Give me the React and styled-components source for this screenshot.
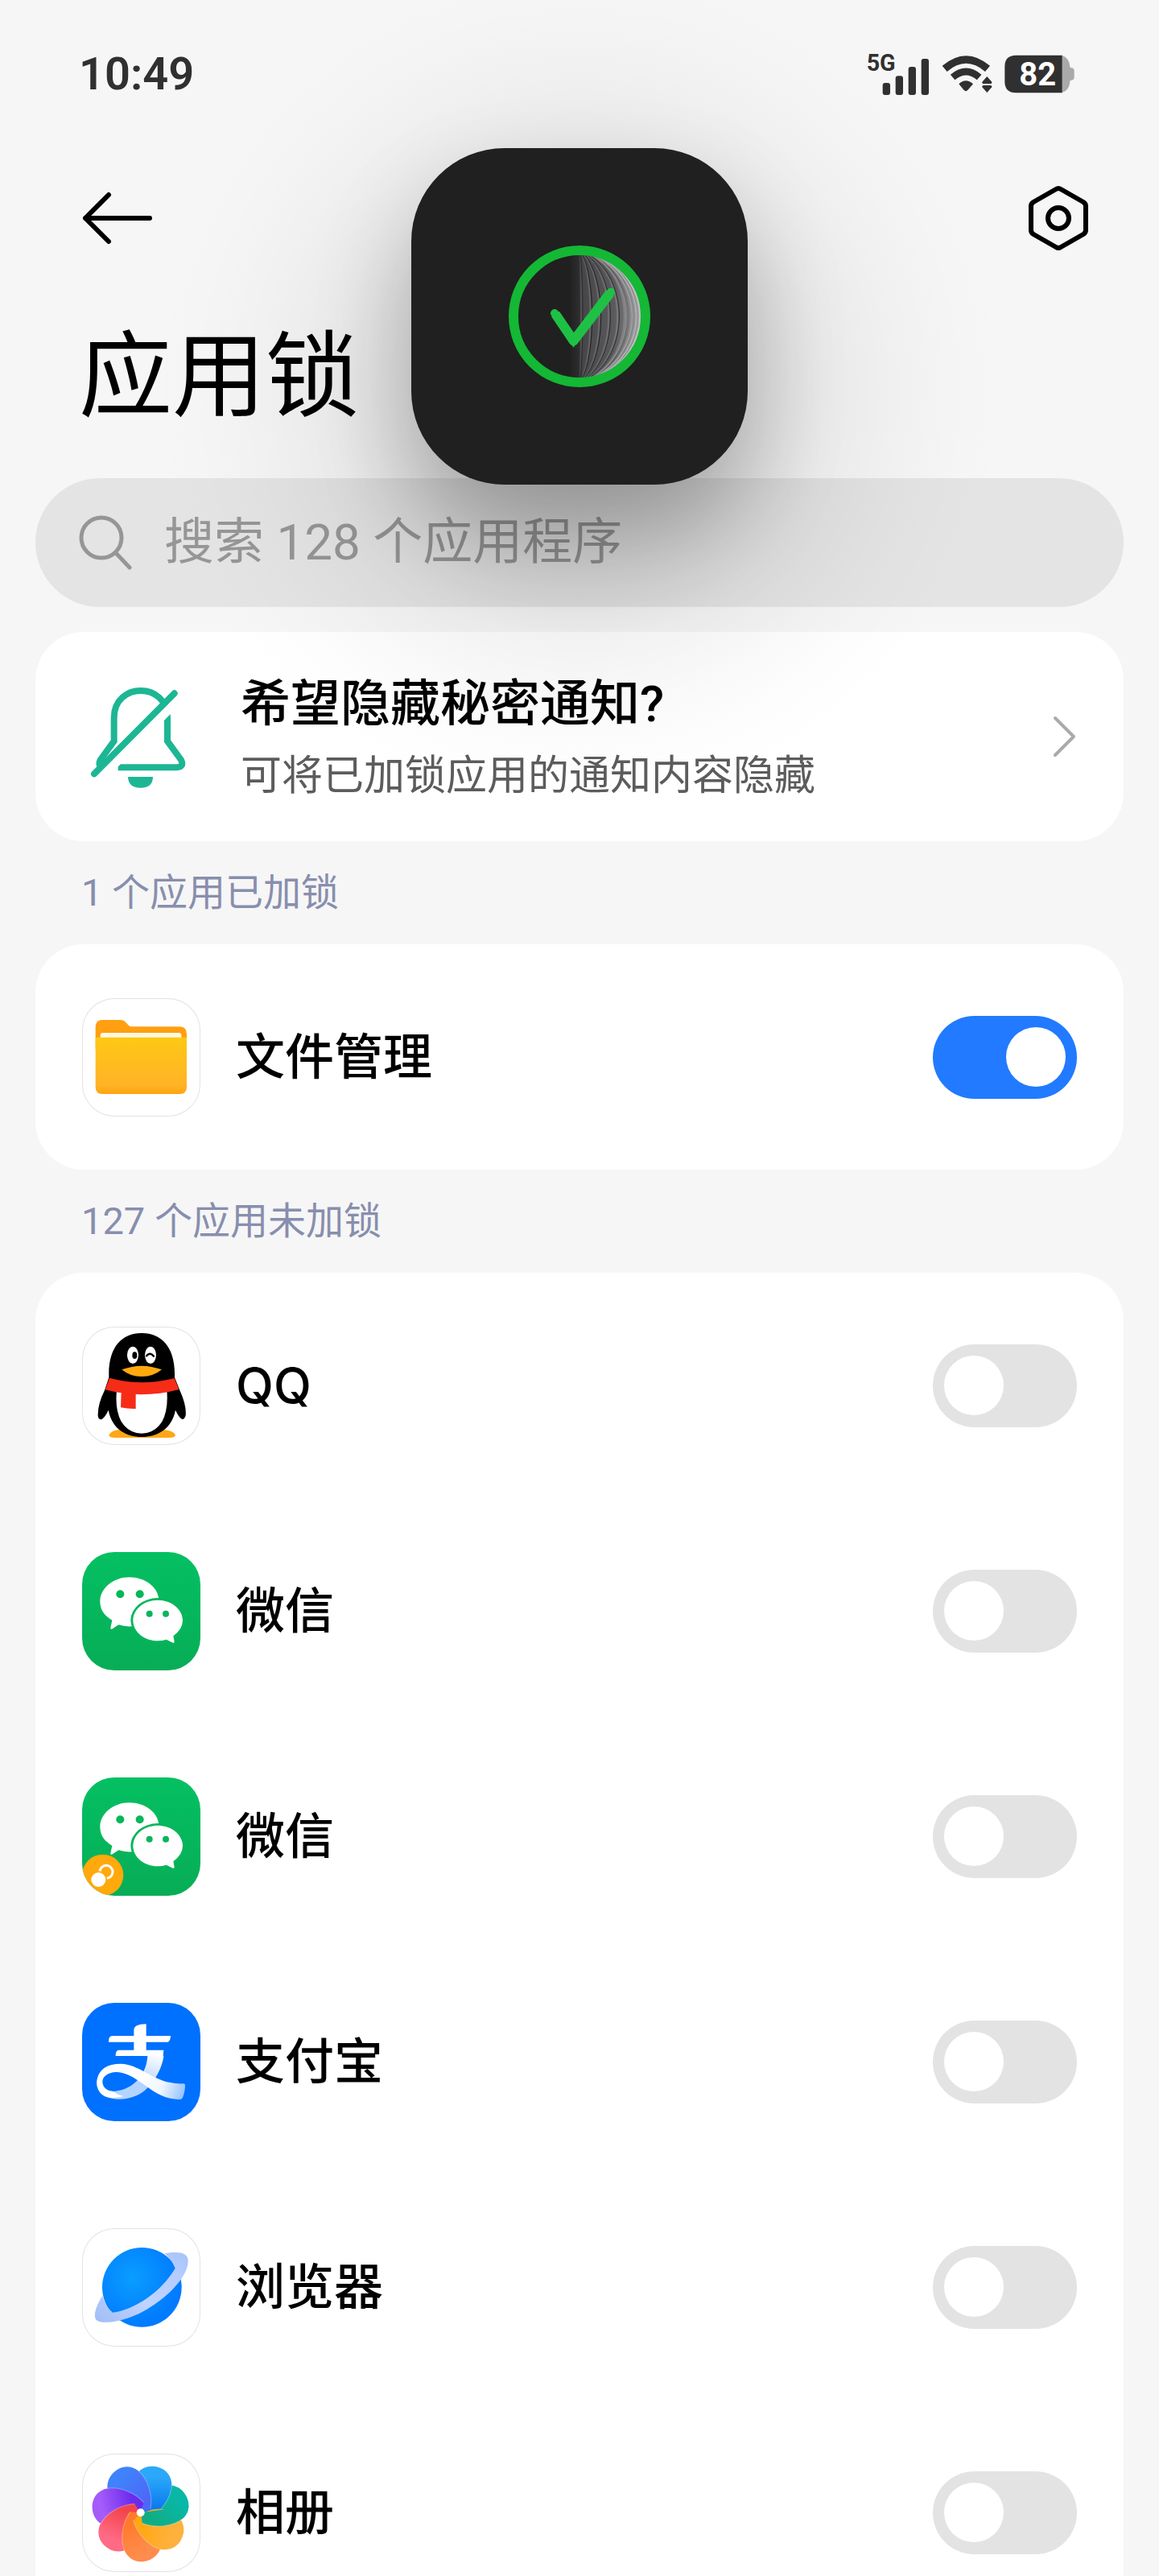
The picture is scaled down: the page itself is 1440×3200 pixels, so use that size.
import React, { useState } from 'react'
import styled, { createGlobalStyle } from 'styled-components'

const GlobalStyle = createGlobalStyle`
  * {
    box-sizing: border-box;
  }

  body {
    margin: 0;
    background: #f6f6f6;
    color: #000;
    font-family: Roboto, 'Noto Sans CJK SC', sans-serif;
  }
`

const Screen = styled.div`
  position: relative;
  height: 100vh;
  overflow: hidden;
`

const StatusBar = styled.div`
  display: flex;
  align-items: center;
  justify-content: space-between;
  height: 184px;
  padding: 0 104px 0 98px;
  color: #303030;
`

const Clock = styled.time`
  font-size: 56px;
  line-height: 64px;
  font-weight: 600;
`

const StatusIcons = styled.div`
  display: flex;
  align-items: center;
  gap: 15px;
`

const Toolbar = styled.header`
  display: flex;
  align-items: center;
  justify-content: space-between;
  height: 174px;
  padding: 0 85px 0 100px;
`

const IconButton = styled.button`
  display: flex;
  padding: 0;
  border: 0;
  background: none;
  color: inherit;
  cursor: pointer;
`

const PageTitle = styled.h1`
  margin: 0;
  padding: 40px 98px 56px;
  font-size: 116px;
  line-height: 140px;
  font-weight: 400;
`

const Content = styled.main`
  padding: 0 44px;
`

const SearchBox = styled.label`
  display: flex;
  align-items: center;
  gap: 40px;
  height: 160px;
  margin-bottom: 31px;
  padding: 0 54px;
  border-radius: 80px;
  background: #e4e4e4;
  color: #969696;
`

const SearchInput = styled.input`
  flex: 1;
  min-width: 0;
  padding: 0;
  border: 0;
  outline: 0;
  background: none;
  font: inherit;
  font-size: 62px;
  line-height: 80px;

  &::placeholder {
    color: #969696;
    opacity: 1;
  }
`

const Card = styled.section`
  border-radius: 60px;
  background: #fff;
`

const NoticeLink = styled.a`
  display: flex;
  align-items: center;
  height: 260px;
  padding: 0 58px 0 68px;
  border-radius: 60px;
  background: #fff;
  color: #000;
  text-decoration: none;
`

const NoticeText = styled.div`
  flex: 1;
  padding: 12px 0 0 67px;
`

const NoticeTitle = styled.div`
  font-size: 62px;
  line-height: 86px;
  font-weight: 500;
`

const NoticeDetail = styled.div`
  font-size: 51px;
  line-height: 92px;
  color: #5c5c5c;
`

const GroupTitle = styled.h2`
  margin: 0;
  padding: 0 57px;
  font-size: 47px;
  line-height: 128px;
  font-weight: 400;
  color: #888eae;
`

const AppList = styled.ul`
  margin: 0;
  padding: 0;
  list-style: none;
`

const AppRow = styled.li`
  display: flex;
  align-items: center;
  gap: 44px;
  height: 280px;
  padding: 0 58px;
`

const AppTile = styled.svg`
  flex: none;
  width: 147px;
  height: 147px;
  border-radius: 40px;
  background: ${({ $fill }) => $fill || '#fff'};
  box-shadow: ${({ $fill }) => ($fill ? 'none' : 'inset 0 0 0 1px #e2e2e2')};
`

const AppName = styled.label`
  flex: 1;
  font-family: Inter, 'Noto Sans CJK SC', sans-serif;
  font-size: 61px;
  line-height: 80px;
  font-weight: 500;
`

const Switch = styled.input`
  appearance: none;
  display: flex;
  align-items: center;
  justify-content: ${({ checked }) => (checked ? 'flex-end' : 'flex-start')};
  flex: none;
  width: 179px;
  height: 103px;
  margin: 0;
  padding: 0 14px;
  border-radius: 52px;
  background: ${({ checked }) => (checked ? '#217aff' : '#e3e3e3')};
  cursor: pointer;

  &::before {
    content: '';
    width: 74px;
    height: 74px;
    border-radius: 50%;
    background: #fff;
  }
`

// wide soft shade that the unlock panel floats on
const UnlockOverlay = styled.div`
  position: absolute;
  top: -66px;
  left: 50%;
  display: flex;
  justify-content: center;
  width: 1100px;
  height: 1100px;
  margin-left: -550px;
  padding-top: 250px;
  background: radial-gradient(
    closest-side,
    rgba(0, 0, 0, 0.18),
    rgba(0, 0, 0, 0.15) 20%,
    rgba(0, 0, 0, 0.1) 38%,
    rgba(0, 0, 0, 0.05) 56%,
    rgba(0, 0, 0, 0.02) 74%,
    rgba(0, 0, 0, 0.005) 88%,
    transparent
  );
  pointer-events: none;
`

const UnlockPanel = styled.div`
  display: flex;
  align-items: center;
  justify-content: center;
  width: 418px;
  height: 418px;
  border-radius: 116px;
  background: #202020;
  box-shadow: 0 60px 120px rgba(0, 0, 0, 0.24);
`

const Signal = () => (
  <svg width='80' height='70' viewBox='100 39 240 210' fill='currentColor'>
    <text x='108' y='132' fontSize='86' fontWeight='700'>5G</text>
    <rect x='168' y='177' width='28' height='45' rx='9' />
    <rect x='216' y='151' width='28' height='71' rx='9' />
    <rect x='264' y='117' width='28' height='105' rx='9' />
    <rect x='312' y='87' width='28' height='135' rx='9' />
  </svg>
)

const Wifi = () => (
  <svg width='64' height='60' viewBox='388 66 192 180' fill='none' stroke='currentColor'>
    <path d='M402 136 Q482 68 562 136' strokeWidth='28' />
    <path d='M432 168 Q482 126 531 168' strokeWidth='26' />
    <path d='M455 193 Q481 168 508 193 L488 216 Q481 223 474 216Z' fill='currentColor' stroke='none' />
    <path d='M560 165 L578 185 Q579 192 572 192 H548 Q541 192 542 185Z M560 225 L542 205 Q541 198 548 198 H572 Q579 198 578 205Z' fill='currentColor' stroke='none' />
  </svg>
)

const Battery = () => (
  <svg width='88' height='60' viewBox='622 64 264 180'>
    <path d='M836 84 Q864 92 867 130 Q882 130 882 142 V166 Q882 178 867 178 Q864 216 836 224Z' fill='#aaa' />
    <path d='M665 84 H837 V224 H665 Q623 224 623 182 V126 Q623 84 665 84Z' fill='#303030' />
    <text x='677' y='197' fontSize='120' fontWeight='700' fill='#fff'>82</text>
  </svg>
)

const BackArrow = () => (
  <svg width='90' height='66' viewBox='0 0 90 66' fill='none' stroke='currentColor' strokeWidth='6' strokeLinecap='round' strokeLinejoin='round'>
    <path d='M35 4 L6 33 L35 62 M6 33 H86' />
  </svg>
)

const SettingsIcon = () => (
  <svg width='80' height='84' viewBox='0 0 80 84' fill='none' stroke='currentColor' strokeWidth='6' strokeLinejoin='round'>
    <path d='M37 6 Q40 4 43 6 L71 22 Q74 24 74 27 V57 Q74 60 71 62 L43 78 Q40 80 37 78 L9 62 Q6 60 6 57 V27 Q6 24 9 22Z' />
    <circle cx='40' cy='42' r='13' />
  </svg>
)

const SearchIcon = () => (
  <svg width='66' height='68' viewBox='0 0 66 68' fill='none' stroke='currentColor' strokeWidth='5' strokeLinecap='round'>
    <circle cx='28' cy='28' r='25' />
    <path d='M46 47 L63 65' />
  </svg>
)

const MutedBell = () => (
  <svg width='120' height='128' viewBox='66 63 360 384' fill='none' stroke='#1db694' strokeWidth='24'>
    <path d='M170 370 H388 Q418 368 405 342 L354 272 V185 C354 50 155 50 155 185 V272 L104 342 Q96 358 106 366' />
    <path d='M425 88 L96 418' stroke='#fff' strokeWidth='33' />
    <path d='M380 94 L81 394' strokeLinecap='round' />
    <path d='M207 405 H300 Q300 446 254 446 T207 405Z' fill='#1db694' stroke='none' />
  </svg>
)

const Chevron = () => (
  <svg width='32' height='54' viewBox='0 0 32 54' fill='none' stroke='#aaa' strokeWidth='4' strokeLinecap='round' strokeLinejoin='round'>
    <path d='M5 4 L28 27 L5 50' />
  </svg>
)

// middle x of every glass rib, the colour of its edge and its width
const ribs = [
  [372, '#29292b', 3],
  [407, '#1f1f21', 3],
  [440, '#1f1f21', 3],
  [475, '#29292b', 3],
  [508, '#29292b', 3],
  [534, '#8c8c8e', 5],
  [557, '#a2a2a4', 5],
  [572, '#b0b0b2', 6],
  [586, '#c0c0c2', 8]
]

const CheckMark = () => (
  <svg width='176' height='176' viewBox='96 75 528 528' fill='none'>
    <defs>
      <linearGradient id='glass'>
        <stop offset='0' stopColor='#222' />
        <stop offset='0.14' stopColor='#2f2f31' />
        <stop offset='0.17' stopColor='#464648' />
        <stop offset='0.6' stopColor='#5a5a5c' />
        <stop offset='1' stopColor='#929294' />
      </linearGradient>
      <clipPath id='dial'>
        <circle cx='360' cy='339' r='230' />
      </clipPath>
    </defs>
    <g clipPath='url(#dial)'>
      <rect x='326' y='100' width='270' height='480' fill='url(#glass)' />
      {ribs.map(([x, color, width], i) => {
        const start = 362 + i * 7
        const bend = (8 * x - 2 * start) / 6
        return (
          <g key={x}>
            <path d={`M${start} 105 C${bend - 8} 200 ${bend - 8} 478 ${start} 573`} stroke='#fff' strokeOpacity='0.14' strokeWidth='7' />
            <path d={`M${start} 105 C${bend} 200 ${bend} 478 ${start} 573`} stroke={color} strokeWidth={width} />
          </g>
        )
      })}
    </g>
    <circle cx='360' cy='339' r='246' stroke='#14b835' strokeWidth='36' />
    <path d='M270 330 L338 430 L474 252' stroke='#1fc145' strokeWidth='36' strokeLinejoin='round' />
    <path d='M267 327 L338 430 L477 248' stroke='#1fc145' strokeWidth='30' strokeLinecap='round' />
  </svg>
)

const FilesIcon = () => (
  <AppTile viewBox='36 51 441 441'>
    <defs>
      <linearGradient id='folder' x1='0' y1='0' x2='0' y2='1'>
        <stop offset='0' stopColor='#fec814' />
        <stop offset='0.85' stopColor='#ffb327' />
        <stop offset='1' stopColor='#ffa40c' />
      </linearGradient>
    </defs>
    <path d='M86 160 Q86 132 112 132 H180 Q192 132 198 140 L210 153 Q214 157 222 157 H398 Q426 157 426 185 V240 H86Z' fill='#ff9f11' />
    <rect x='104' y='180' width='302' height='40' rx='10' fill='#fff8e0' />
    <path d='M86 197 H426 V382 Q426 408 400 408 H112 Q86 408 86 382Z' fill='url(#folder)' />
  </AppTile>
)

const QQIcon = () => (
  <AppTile viewBox='36 51 441 441'>
    <path d='M136 456 Q142 436 185 434 H335 Q378 438 384 456 Q382 465 360 465 H160 Q138 465 136 456Z' fill='#ffa615' />
    <path d='M136 240 C132 130 182 75 258 75 S385 130 381 240 L400 288 Q426 345 422 382 Q418 398 408 396 Q396 388 384 362 C372 425 325 462 258 462 S146 425 134 362 Q122 388 110 396 Q96 400 95 382 Q94 340 120 288Z' fill='#000' />
    <path d='M165 290 H352 Q358 360 334 405 Q306 449 258 449 T182 405 Q158 360 165 290Z' fill='#fff' />
    <path d='M138 242 Q258 275 380 243 L397 285 Q260 322 122 286Z M182 296 H236 V357 Q206 358 180 352Z' fill='#f62c17' />
    <ellipse cx='225' cy='157' rx='21' ry='32' fill='#fff' />
    <ellipse cx='291' cy='157' rx='21' ry='32' fill='#fff' />
    <ellipse cx='232' cy='158' rx='9' ry='13' fill='#000' />
    <path d='M276 160 Q290 144 303 161' fill='none' stroke='#000' strokeWidth='7' strokeLinecap='round' />
    <path d='M184 211 Q222 197 258 197 T333 211 Q302 237 258 237 T184 211Z' fill='#ffa90f' />
  </AppTile>
)

const WeChatIcon = ({ cloned }) => (
  <AppTile viewBox='36 51 441 441' $fill='linear-gradient(#04c062, #07ad56)'>
    <path d='M212 145 C272 145 318 182 322 226 Q240 224 222 328 Q196 330 172 322 L147 338 Q141 340 142 333 L148 305 C118 288 103 264 103 236 C103 186 152 145 212 145Z' fill='#fff' />
    <ellipse cx='318' cy='306' rx='101' ry='84' fill='#07b65b' />
    <path d='M318 230 C369 230 411 264 411 306 Q411 338 376 364 L380 385 Q380 391 374 389 L350 377 Q334 382 318 382 C267 382 226 348 226 306 S267 230 318 230Z' fill='#fff' />
    <g fill='#07b65b'>
      <circle cx='178' cy='208' r='15' />
      <circle cx='251' cy='208' r='15' />
      <circle cx='287' cy='281' r='12' />
      <circle cx='348' cy='281' r='12' />
    </g>
    {cloned && (
      <g>
        <circle cx='113' cy='415' r='77' fill='#ffa90d' />
        <circle cx='126' cy='403' r='24' fill='none' stroke='#fff' strokeWidth='9' />
        <circle cx='97' cy='432' r='32' fill='#ffa90d' />
        <circle cx='97' cy='432' r='27' fill='#fff' />
      </g>
    )}
  </AppTile>
)

const AlipayIcon = () => (
  <AppTile viewBox='36 51 441 441' $fill='#0070ff'>
    <defs>
      <linearGradient id='leg' gradientUnits='userSpaceOnUse' x1='310' y1='240' x2='270' y2='350'>
        <stop offset='0' stopColor='#fff' />
        <stop offset='1' stopColor='#b4d4ff' />
      </linearGradient>
      <linearGradient id='loop' gradientUnits='userSpaceOnUse' x1='250' y1='330' x2='420' y2='390'>
        <stop offset='0' stopColor='#fff' />
        <stop offset='0.5' stopColor='#f0f7ff' />
        <stop offset='1' stopColor='#8fc0ff' />
      </linearGradient>
    </defs>
    <path d='M280 249 H340 C336 290 300 370 240 396 C205 412 155 416 122 400 C100 388 92 370 100 355 Q120 384 160 380 C225 374 276 320 280 249Z' fill='url(#leg)' />
    <path d='M122 400 C96 388 88 362 91 340 C98 298 130 278 180 278 C245 280 300 336 360 347 Q388 353 414 352 Q420 352 420 358 Q420 384 411 404 Q408 411 400 411 C350 412 310 388 270 358 C225 324 190 308 160 309 C128 312 112 328 112 345 C112 362 124 378 150 381 Q170 395 190 399 Q150 410 122 400Z' fill='url(#loop)' />
    <path d='M147 174 H229 V154 C229 138 243 130 275 130 V174 H366 Q367 188 357 197 H275 V227 H340 L338 249 H161 Q160 232 170 227 H229 V197 H135 Q134 176 147 174Z' fill='#fff' />
  </AppTile>
)

const BrowserIcon = () => (
  <AppTile viewBox='36 51 441 441'>
    <defs>
      <radialGradient id='planet' cx='0.38' cy='0.38' r='0.62'>
        <stop offset='0' stopColor='#0a9dff' />
        <stop offset='1' stopColor='#007aff' />
      </radialGradient>
      <linearGradient id='orbit' x1='0' y1='1' x2='1' y2='0'>
        <stop offset='0' stopColor='#9fbdf5' />
        <stop offset='0.4' stopColor='#bfd3ff' />
        <stop offset='0.8' stopColor='#b4cbff' />
        <stop offset='1' stopColor='#a6c2f8' />
      </linearGradient>
    </defs>
    <circle cx='259' cy='271' r='148' fill='url(#planet)' />
    <path d='M343 145 C395 136 434 140 431 176 C428 235 350 315 260 363 C190 400 110 412 88 392 C76 376 90 335 112 303 Q124 345 150 365 C230 355 330 290 383 200 Q370 168 343 145Z' fill='url(#orbit)' />
  </AppTile>
)

// counter-clockwise, each petal covers the one before it
const petals = [
  [51, '#08b7a6', '#10ad84'],
  [0, '#2ba8fa', '#0b7bf0'],
  [-51, '#3f82fb', '#4d68f8'],
  [-103, '#a45bfa', '#6a2bee'],
  [-154, '#ff6a84', '#f2444c'],
  [-206, '#ff8c4c', '#ff7a2c'],
  [-257, '#ffb13e', '#ffa814']
]

const petalShape = 'M34 20 C80 -5 116 -60 116 -105 C114 -150 80 -173 41 -173 C0 -172 -30 -140 -32 -90 C-32 -50 -10 -5 34 20Z'

const Petal = ({ angle, name }) => (
  <g transform={`translate(254 271) rotate(${angle})`}>
    <path d={petalShape} fill={`url(#${name})`} />
    <path d='M34 20 C80 -5 116 -60 116 -105' fill='none' stroke='#fff' strokeOpacity='0.25' strokeWidth='4' />
  </g>
)

const GalleryIcon = () => (
  <AppTile viewBox='36 51 441 441'>
    <defs>
      {petals.map(([angle, outer, inner], i) => (
        <linearGradient key={angle} id={`petal${i}`} x1='0.5' y1='0' x2='0.5' y2='1'>
          <stop offset='0.2' stopColor={outer} />
          <stop offset='0.8' stopColor={inner} />
        </linearGradient>
      ))}
      <clipPath id='lowerHalf'>
        <path d='M254 271 L480 240 V400 H240Z' />
      </clipPath>
    </defs>
    {petals.map(([angle], i) => <Petal key={angle} angle={angle} name={`petal${i}`} />)}
    <g clipPath='url(#lowerHalf)'>
      <Petal angle={51} name='petal0' />
    </g>
    <circle cx='254' cy='271' r='15' fill='#fff' />
  </AppTile>
)

const lockedApps = [{ id: 'files', name: '文件管理', icon: <FilesIcon /> }]

const unlockedApps = [
  { id: 'qq', name: 'QQ', icon: <QQIcon /> },
  { id: 'wechat', name: '微信', icon: <WeChatIcon /> },
  { id: 'wechat-clone', name: '微信', icon: <WeChatIcon cloned /> },
  { id: 'alipay', name: '支付宝', icon: <AlipayIcon /> },
  { id: 'browser', name: '浏览器', icon: <BrowserIcon /> },
  { id: 'gallery', name: '相册', icon: <GalleryIcon /> }
]

const AppGroup = ({ title, apps, locked, onToggle }) => (
  <>
    <GroupTitle>{title}</GroupTitle>
    <Card>
      <AppList>
        {apps.map(({ id, name, icon }) => (
          <AppRow key={id}>
            {icon}
            <AppName htmlFor={id}>{name}</AppName>
            <Switch
              id={id}
              type='checkbox'
              role='switch'
              checked={Boolean(locked[id])}
              onChange={() => onToggle(id)}
            />
          </AppRow>
        ))}
      </AppList>
    </Card>
  </>
)

const App = () => {
  const [query, setQuery] = useState('')
  const [locked, setLocked] = useState({ files: true })

  const onToggle = (id) => {
    setLocked({ ...locked, [id]: !locked[id] })
  }

  return (
    <Screen>
      <GlobalStyle />
      <StatusBar>
        <Clock>10:49</Clock>
        <StatusIcons>
          <Signal />
          <Wifi />
          <Battery />
        </StatusIcons>
      </StatusBar>
      <Toolbar>
        <IconButton aria-label='返回'><BackArrow /></IconButton>
        <IconButton aria-label='设置'><SettingsIcon /></IconButton>
      </Toolbar>
      <PageTitle>应用锁</PageTitle>
      <Content>
        <SearchBox>
          <SearchIcon />
          <SearchInput
            value={query}
            onChange={(event) => setQuery(event.target.value)}
            placeholder='搜索 128 个应用程序'
          />
        </SearchBox>
        <NoticeLink href='#notifications'>
          <MutedBell />
          <NoticeText>
            <NoticeTitle>希望隐藏秘密通知?</NoticeTitle>
            <NoticeDetail>可将已加锁应用的通知内容隐藏</NoticeDetail>
          </NoticeText>
          <Chevron />
        </NoticeLink>
        <AppGroup title='1 个应用已加锁' apps={lockedApps} locked={locked} onToggle={onToggle} />
        <AppGroup title='127 个应用未加锁' apps={unlockedApps} locked={locked} onToggle={onToggle} />
      </Content>
      <UnlockOverlay>
        <UnlockPanel role='status'>
          <CheckMark />
        </UnlockPanel>
      </UnlockOverlay>
    </Screen>
  )
}

export default App
